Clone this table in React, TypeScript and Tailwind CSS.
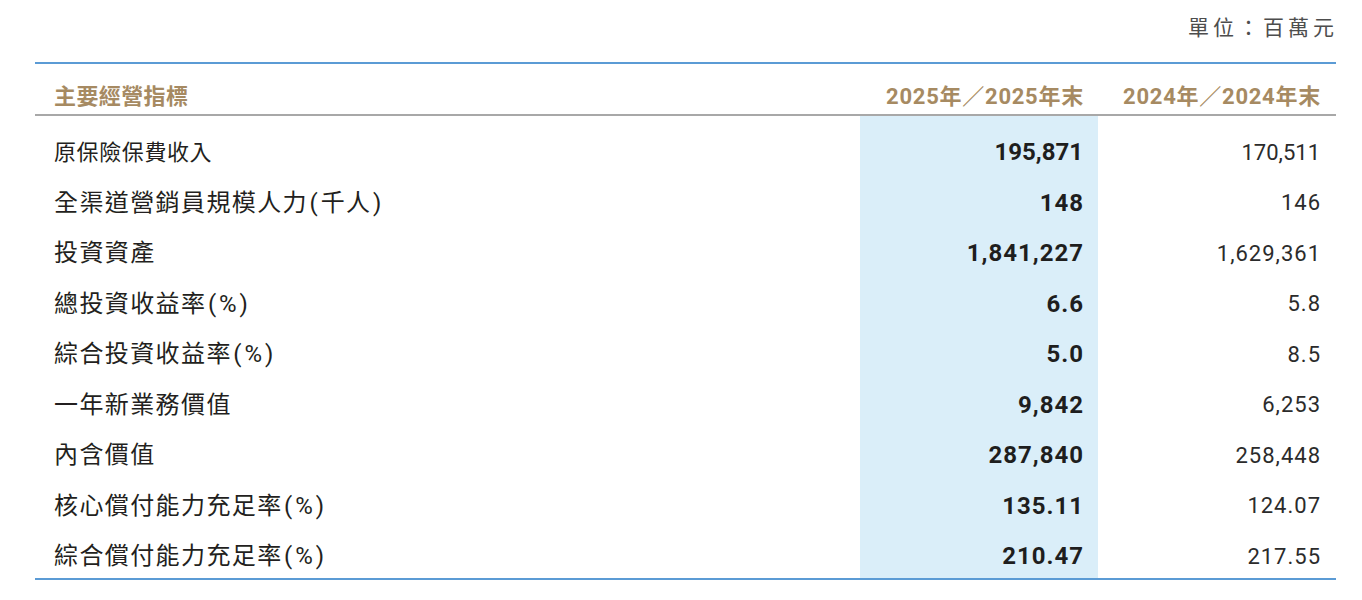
import React from 'react';

type Row = { label: React.ReactNode; key: string; cur: string; prev: string };

// half-width paren with a little air, as in the printed table
const P = ({ c }: { c: string }) => <span className="px-[1.5px]">{c}</span>;

const rows: Row[] = [
  { key: 'a', label: '原保險保費收入', cur: '195,871', prev: '170,511' },
  { key: 'b', label: <>全渠道營銷員規模人力<P c="(" />千人<P c=")" /></>, cur: '148', prev: '146' },
  { key: 'c', label: '投資資產', cur: '1,841,227', prev: '1,629,361' },
  { key: 'd', label: <>總投資收益率<P c="(" />%<P c=")" /></>, cur: '6.6', prev: '5.8' },
  { key: 'e', label: <>綜合投資收益率<P c="(" />%<P c=")" /></>, cur: '5.0', prev: '8.5' },
  { key: 'f', label: '一年新業務價值', cur: '9,842', prev: '6,253' },
  { key: 'g', label: '內含價值', cur: '287,840', prev: '258,448' },
  { key: 'h', label: <>核心償付能力充足率<P c="(" />%<P c=")" /></>, cur: '135.11', prev: '124.07' },
  { key: 'i', label: <>綜合償付能力充足率<P c="(" />%<P c=")" /></>, cur: '210.47', prev: '217.55' },
];

const font = { fontFamily: 'Roboto, "Noto Sans CJK TC", sans-serif' };

export default function App() {
  return (
    <div className="w-[1362px] h-[600px] bg-white text-[#231f20]" style={font}>
      {/* unit line */}
      <div className="flex justify-end pr-[24px] pt-[16px] h-[62px]">
        <span className="text-[21px] leading-[24px] tracking-[4px] text-[#4d4d4d]">單位：百萬元</span>
      </div>

      {/* table */}
      <div className="ml-[35px] w-[1301px] border-t-2 border-b-2 border-[#5b9bd5]">
        {/* header */}
        <div className="grid grid-cols-[825px_238px_238px] border-b-2 border-[#a8a8a8] text-[#a68a62] font-bold text-[22px] leading-[24px] pt-[21px] pb-[5px]">
          <div className="pl-[19px] tracking-[0.4px]">主要經營指標</div>
          <div className="text-right pr-[14px] tracking-[0.75px] whitespace-nowrap">2025年／2025年末</div>
          <div className="text-right pr-[15px] tracking-[0.75px] whitespace-nowrap">2024年／2024年末</div>
        </div>

        {/* body */}
        <div className="grid grid-cols-[825px_238px_238px]">
          <div className="pt-[7px]">
            {rows.map((r, i) => (
              <div
                key={r.key}
                className={`h-[50.5px] flex items-center pt-[8px] pl-[19px] whitespace-nowrap ${
                  i === 0 ? 'text-[22px] tracking-[0.6px]' : 'text-[24px] tracking-[1.4px]'
                }`}
              >
                {r.label}
              </div>
            ))}
          </div>
          <div className="pt-[7px] bg-[#daeef9]">
            {rows.map((r, i) => (
              <div
                key={r.key}
                className={`h-[50.5px] flex items-center justify-end pt-[8px] text-[24px] font-bold text-[#1e1e1e] ${
                  i === 0 ? 'pr-[15px]' : 'pr-[14px] tracking-[1px]'
                }`}
              >
                {r.cur}
              </div>
            ))}
          </div>
          <div className="pt-[7px]">
            {rows.map((r, i) => (
              <div
                key={r.key}
                className={`h-[50.5px] flex items-center justify-end pt-[8px] text-[22px] text-[#2b2b2b] ${
                  i === 0 ? 'pr-[16px]' : 'pr-[15px] tracking-[1px]'
                }`}
              >
                {r.prev}
              </div>
            ))}
          </div>
        </div>
      </div>
    </div>
  );
}
